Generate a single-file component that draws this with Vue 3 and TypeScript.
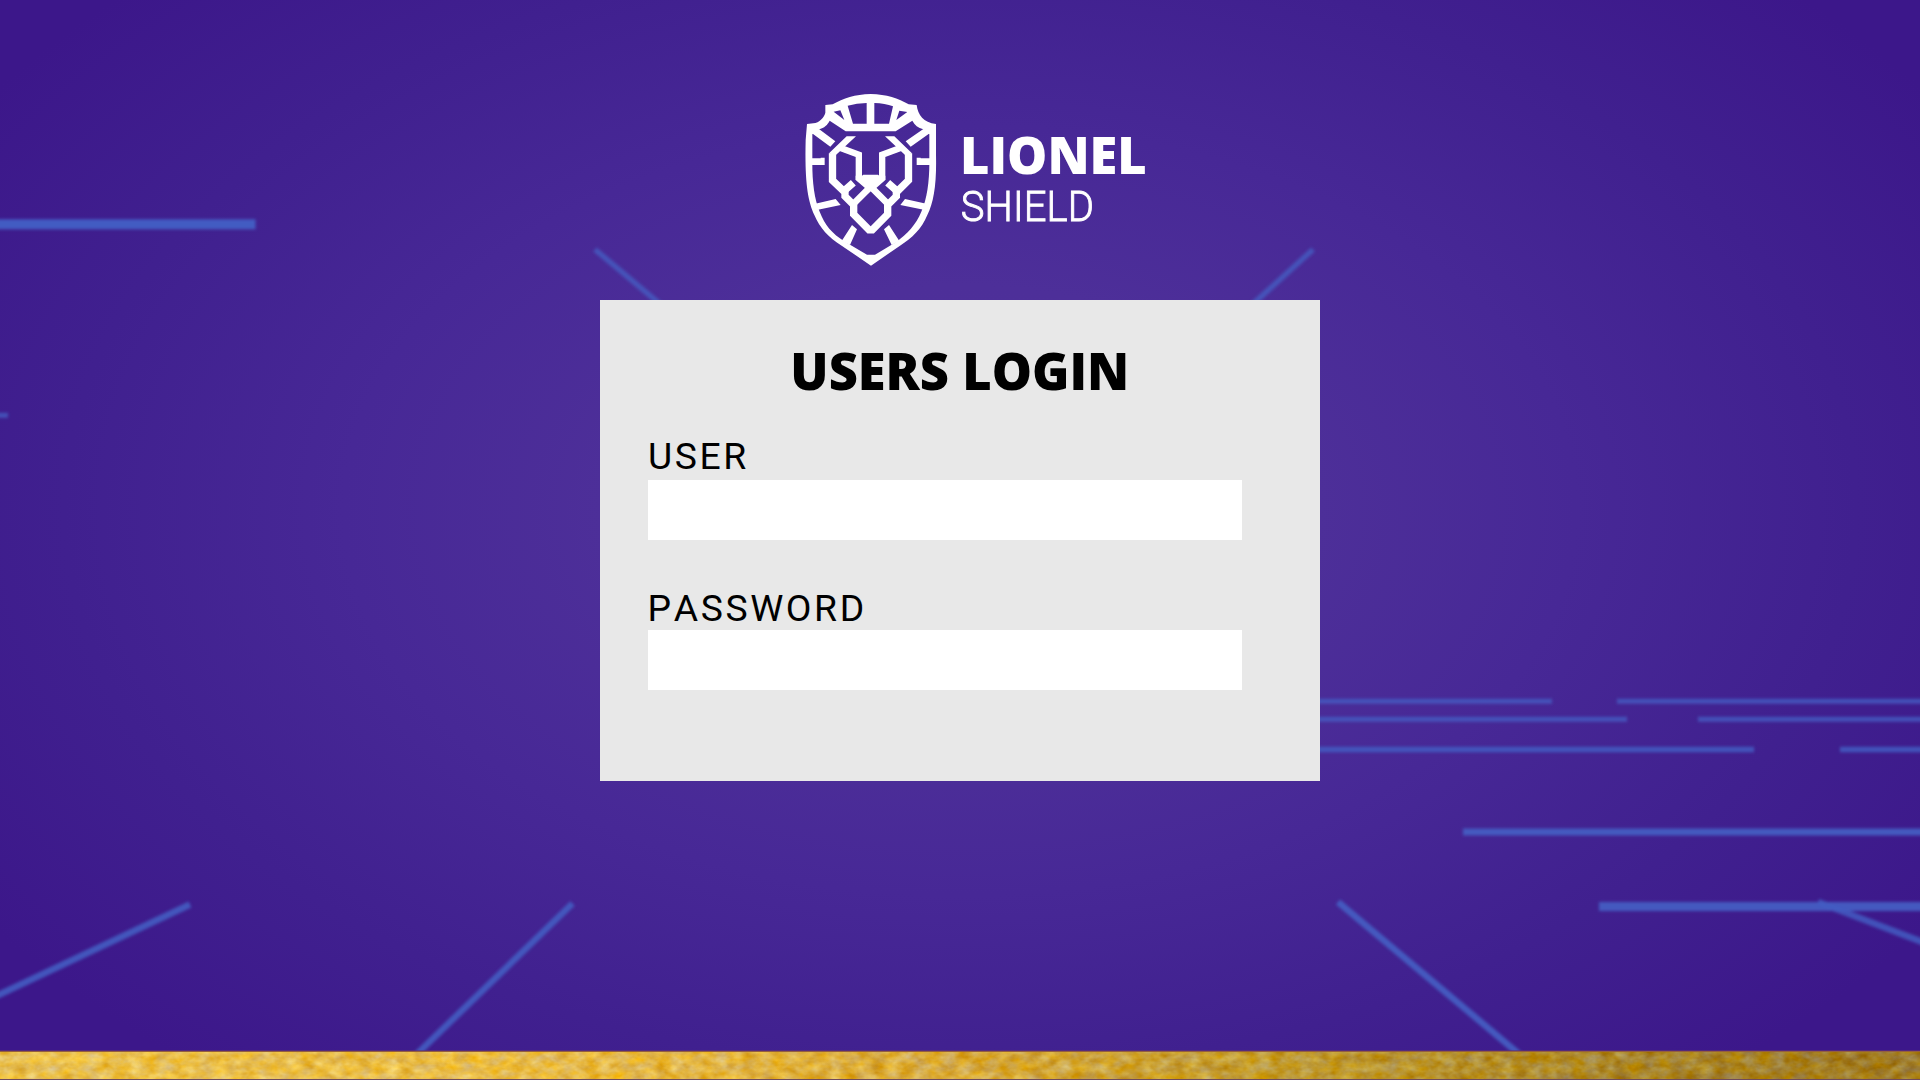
<script setup lang="ts">
import { ref } from 'vue'

interface Streak {
  x1: number
  y1: number
  x2: number
  y2: number
  w: number
  o: number
}

const user = ref('')
const password = ref('')

const streaks: Streak[] = [
  { x1: -5, y1: 224.3, x2: 255.5, y2: 224.3, w: 10, o: 1 },
  { x1: -5, y1: 415.3, x2: 8, y2: 415.3, w: 5, o: 0.8 },
  { x1: 595, y1: 249.5, x2: 660, y2: 304, w: 5.5, o: 0.8 },
  { x1: 1313, y1: 249.5, x2: 1253, y2: 304, w: 5.5, o: 0.8 },
  { x1: 1300, y1: 701.3, x2: 1552, y2: 701.3, w: 5, o: 0.8 },
  { x1: 1617, y1: 701.3, x2: 1930, y2: 701.3, w: 5, o: 0.8 },
  { x1: 1300, y1: 719.2, x2: 1627, y2: 719.2, w: 5, o: 0.8 },
  { x1: 1698, y1: 719.2, x2: 1930, y2: 719.2, w: 5, o: 0.8 },
  { x1: 1300, y1: 749.6, x2: 1754, y2: 749.6, w: 5.5, o: 0.85 },
  { x1: 1840, y1: 749.6, x2: 1930, y2: 749.6, w: 5.5, o: 0.85 },
  { x1: 1463, y1: 832, x2: 1930, y2: 832, w: 7, o: 0.95 },
  { x1: 1599, y1: 906.6, x2: 1930, y2: 906.6, w: 9, o: 0.95 },
  { x1: 1338, y1: 902, x2: 1519, y2: 1054, w: 6.5, o: 0.95 },
  { x1: 1818, y1: 902, x2: 1930, y2: 945, w: 6.5, o: 0.85 },
  { x1: 190, y1: 904.5, x2: -8, y2: 998, w: 6.5, o: 0.9 },
  { x1: 572.5, y1: 903.5, x2: 417, y2: 1054, w: 6.5, o: 0.9 },
]
</script>

<template>
  <main class="page">
    <svg class="backdrop" width="1920" height="1080" viewBox="0 0 1920 1080" aria-hidden="true">
      <defs>
        <filter id="soft" filterUnits="userSpaceOnUse" x="-20" y="0" width="1960" height="1080">
          <feGaussianBlur stdDeviation="1.5" />
        </filter>
        <linearGradient id="gold" x1="0" x2="1" y1="0" y2="0">
          <stop offset="0" stop-color="#eac150" />
          <stop offset="0.3" stop-color="#e8ba45" />
          <stop offset="0.5" stop-color="#d8aa3b" />
          <stop offset="0.67" stop-color="#c19b30" />
          <stop offset="0.85" stop-color="#ab8729" />
          <stop offset="1" stop-color="#a07b23" />
        </linearGradient>
        <filter id="grain" filterUnits="userSpaceOnUse" x="0" y="1052" width="1920" height="27" color-interpolation-filters="sRGB">
          <feTurbulence type="fractalNoise" baseFrequency="0.07 0.11" numOctaves="3" seed="8" />
          <feColorMatrix
            type="matrix"
            values="0.2 0 0 0 0.4  0.2 0.18 0 0 0.31  0 0.6 0 0 0.2  0 0 0 0 1"
            result="speckle"
          />
          <feComposite in="SourceGraphic" in2="speckle" operator="arithmetic" k1="0" k2="1" k3="1" k4="-0.5" />
          <feComponentTransfer>
            <feFuncA type="linear" slope="0" intercept="1" />
          </feComponentTransfer>
        </filter>
      </defs>
      <g filter="url(#soft)" stroke="#435cc2">
        <line
          v-for="(s, i) in streaks"
          :key="i"
          :x1="s.x1"
          :y1="s.y1"
          :x2="s.x2"
          :y2="s.y2"
          :stroke-width="s.w"
          :stroke-opacity="s.o"
        />
      </g>
      <rect x="0" y="1050" width="1920" height="1" fill="#64366e" opacity="0.6" />
      <rect x="0" y="1051" width="1920" height="1" fill="#94603f" />
      <rect x="0" y="1052" width="1920" height="27" fill="url(#gold)" filter="url(#grain)" />
      <rect x="0" y="1079" width="1920" height="1" fill="#6f4a5c" />
    </svg>

    <header class="brand">
      <svg class="lion" viewBox="0 0 480 600" fill="#fff" role="img" aria-label="Lionel Shield">
        <path
          fill-rule="evenodd"
          d="M106 75 L128 73 C160 55 195 43 242 42 C290 43 325 55 356 73 L380 75 C384 105 400 128 438 132
             V225 C440 310 432 365 412 405 C395 447 365 475 330 497 L243 557 L155 497 C115 472 90 445 73 405
             C52 360 44 300 47 180 L51 132 L70 130 C88 128 103 112 106 98 Z
             M87 148 C103 144 113 134 119 122 L167 154 H317 L367 122 C374 135 384 144 400 148 L418 163
             V235 C419 300 412 355 394 395 C378 435 350 462 320 485 L255 524 H231 L165 485 C125 460 105 435 89 395
             C72 355 66 300 67 235 V163 Z
             M131 95 L151 91 L163 120 Z
             M173 77 Q200 70 230 69 V131 H189 Z
             M253 69 Q285 70 309 79 L297 131 H253 Z
             M328 92 L352 96 L319 120 Z"
        />
        <path d="M60 150 L87 147 L136 184 L121 200 L66 160 Z M425 150 L400 147 L347 184 L362 200 L419 160 Z" />
        <path d="M62 235 H92 V233 H104 V255 H62 Z M423 235 H392 V233 H380 V255 H423 Z" />
        <path d="M76 371 L137 357 L152 375 L84 389 Z M409 371 L345 357 L331 375 L401 389 Z" />
        <path d="M186 435 L201 448 L180 495 L155 483 Z M297 435 L282 448 L305 495 L328 483 Z" />
        <path d="M170 169 H198 L137 226 L117 220 Z M313 169 H285 L346 226 L366 220 Z" />
        <g fill="none" stroke="#fff" stroke-width="22">
          <path d="M127.500 220 V301 L165 337 V349 L191 375 V403 L237 449.500 H247 L293 403 V375 L319 349 V337 L355.500 301 V220" />
          <path d="M152 204 L206.500 224 V300 M331 204 L276.500 224 V300" stroke-width="19" />
          <path d="M161 334 L190 308 M322 334 L293 308" />
          <path d="M184 378 L242 320 L300 378" stroke-width="20" />
        </g>
        <path d="M197 287 H216 L220 284 H264 L268 287 H286 V300 L252 330 H232 L197 300 Z" />
      </svg>
      <div class="wordmark">
        <span class="wordmark-top">LIONEL</span>
        <span class="wordmark-bottom">SHIELD</span>
      </div>
    </header>

    <form class="panel" @submit.prevent>
      <h1 class="title">USERS LOGIN</h1>
      <div class="field">
        <label class="label" for="user">USER</label>
        <input id="user" v-model="user" class="input" type="text" autocomplete="off" />
      </div>
      <div class="field field-password">
        <label class="label" for="password">PASSWORD</label>
        <input id="password" v-model="password" class="input" type="password" autocomplete="off" />
      </div>
    </form>
  </main>
</template>

<style>
body {
  margin: 0;
  overflow: hidden;
}
</style>

<style scoped>
.page {
  position: relative;
  box-sizing: border-box;
  width: 1920px;
  height: 1080px;
  padding: 80px 0 0 600px;
  overflow: hidden;
  background: radial-gradient(ellipse 1120px 700px at 960px 510px, #513199 0%, #4d2f99 32%, #472896 55%, #40208f 80%, #3c178a 105%);
}

.backdrop {
  position: absolute;
  inset: 0;
}

.brand {
  position: relative;
  display: flex;
  height: 220px;
  padding-left: 190px;
}

.lion {
  width: 160px;
  height: 200px;
}

.wordmark {
  display: flex;
  flex-direction: column;
  gap: 6px;
  padding: 52.4px 0 0 10px;
  color: #fff;
  white-space: nowrap;
}

.wordmark-top {
  font: 800 50.6px/46px 'Open Sans', sans-serif;
  letter-spacing: 0;
}

.wordmark-bottom {
  padding-left: 0.8px;
  font: 300 43px/44px Roboto, sans-serif;
  letter-spacing: 0.1px;
  transform: scaleX(0.93);
  transform-origin: left;
  -webkit-text-stroke: 0.9px #fff;
}

.panel {
  position: relative;
  box-sizing: border-box;
  width: 719.6px;
  height: 480.6px;
  padding: 41px 0 0 48px;
  background: #e8e8e8;
}

.title {
  margin: 0 0 35px -48px;
  color: #000;
  font: 800 50.6px/60px 'Open Sans', sans-serif;
  text-align: center;
  letter-spacing: 0;
}

.field {
  display: flex;
  flex-direction: column;
  gap: 3.5px;
}

.field-password {
  gap: 1.5px;
  margin: 48px 0 0 -0.4px;
}

.label {
  height: 40px;
  color: #000;
  font: 400 37.3px/40px Roboto, sans-serif;
  font-kerning: none;
  letter-spacing: 2.6px;
}

.input {
  box-sizing: border-box;
  width: 594px;
  height: 60.5px;
  margin: 0;
  padding: 0 16px;
  border: 0;
  outline: 0;
  background: #fff;
  font: 400 28px Roboto, sans-serif;
}
</style>
